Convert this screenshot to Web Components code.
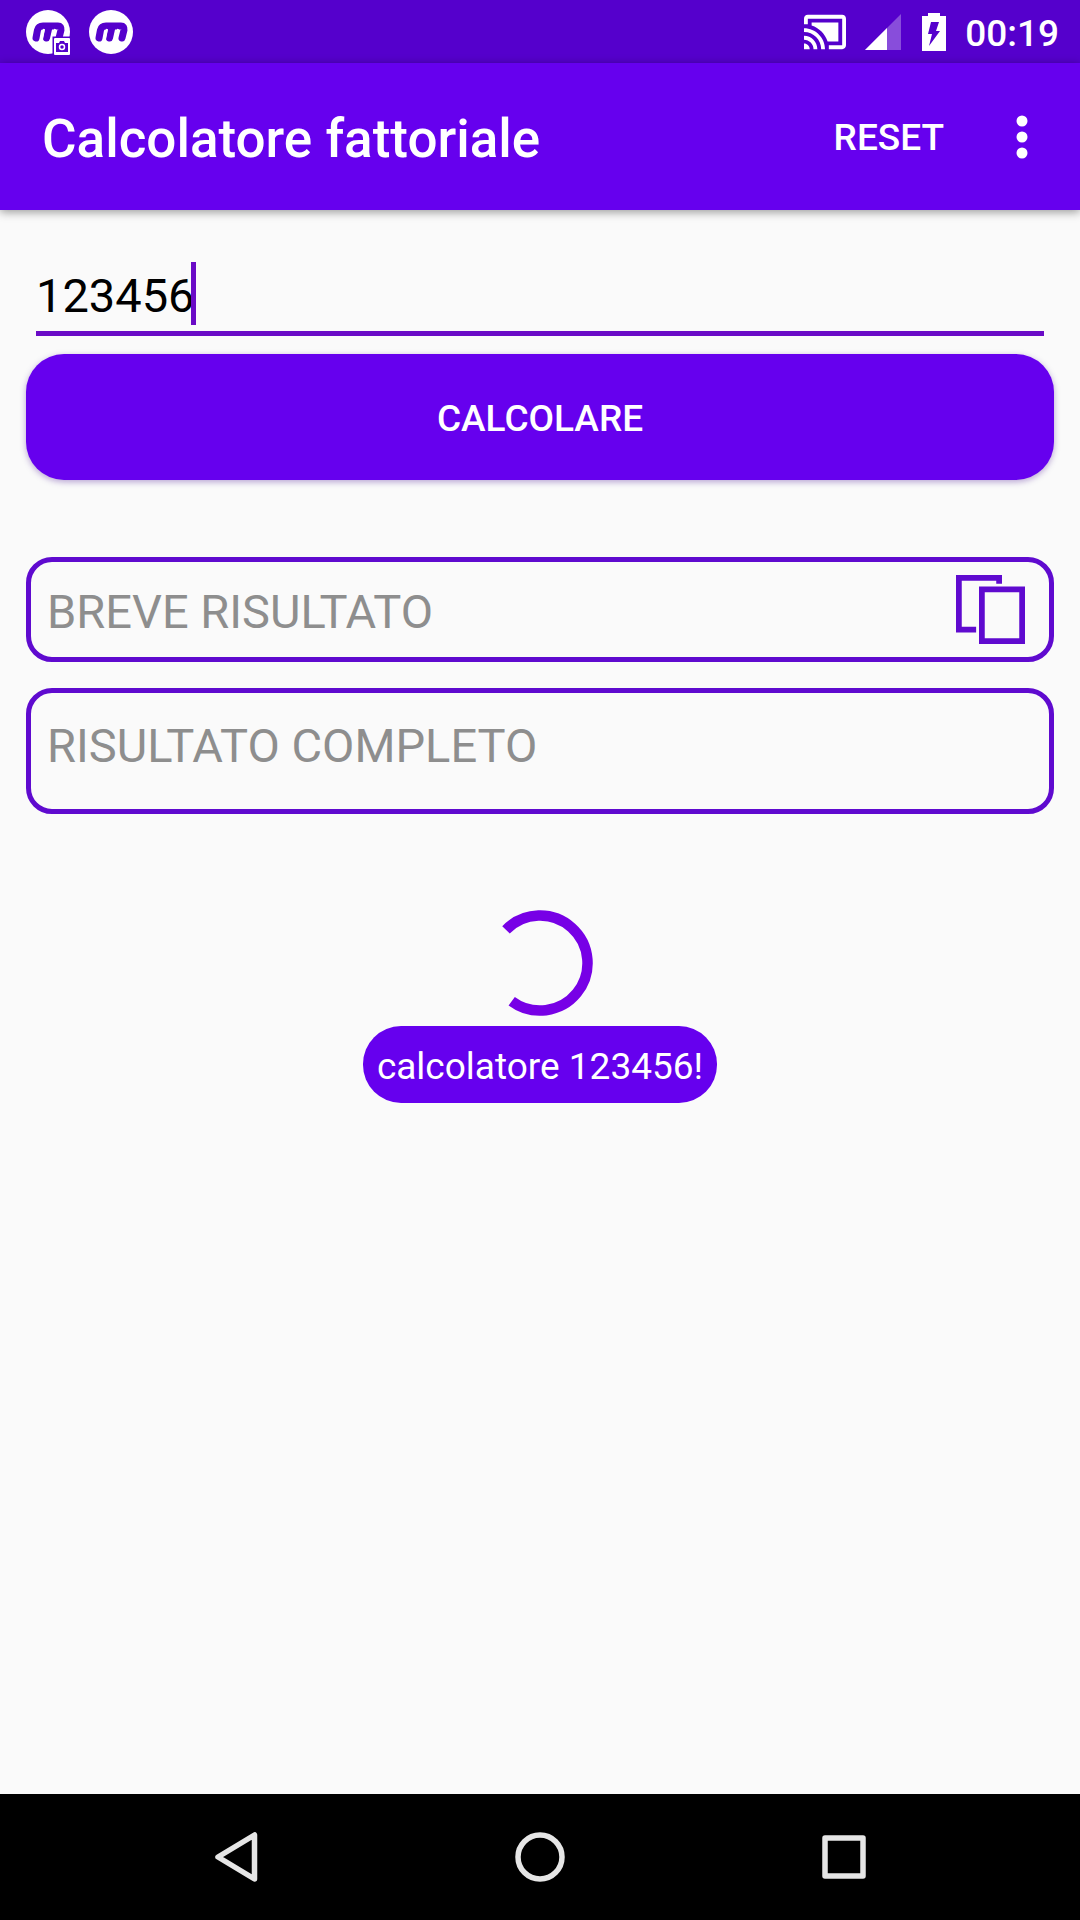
<!DOCTYPE html>
<html lang="it">
  <head>
    <meta charset="utf-8" />
    <meta name="viewport" content="width=device-width,initial-scale=1" />
    <title>Calcolatore fattoriale</title>
    <style>
      body {
        margin: 0;
        background: #fafafa;
        font-family: Roboto, sans-serif;
      }
    </style>

    <template id="statusBarTemplate">
      <style>
        :host {
          display: flex;
          align-items: center;
          justify-content: space-between;
          height: 63px;
          padding: 0 21px 0 26px;
          background: #5500cc;
          color: #fff;
        }

        div {
          display: flex;
          align-items: center;
          gap: 19px;
        }

        svg {
          display: block;
        }

        time {
          padding-top: 3px;
          font-size: 37px;
          font-weight: 500;
        }
      </style>
      <div>
        <svg width="44" height="46" viewBox="0 0 44 46" fill="none">
          <circle cx="22" cy="23" r="22" fill="#fff" />
          <path d="M10 29 11.500 21Q12.500 17 17 17H32Q35.500 17 35 21L33 29M20.500 29 23 18" stroke="#5500cc" stroke-width="7" stroke-linecap="round" stroke-linejoin="round" />
          <path d="M15.500 33 18 20M26.500 33 29 20" stroke="#fff" stroke-width="2" />
          <rect x="26.500" y="27.500" width="18" height="19" fill="#5500cc" />
          <rect x="28" y="29" width="16" height="17" rx="1" fill="#fff" />
          <path d="M30 34h3l1-2h4l1 2h3v9H30z" fill="#5500cc" />
          <circle cx="36" cy="38" r="2.500" stroke="#fff" stroke-width="1.500" />
        </svg>
        <svg width="44" height="46" viewBox="0 0 44 46" fill="none">
          <circle cx="22" cy="23" r="22" fill="#fff" />
          <path d="M10 29 11.500 21Q12.500 17 17 17H32Q35.500 17 35 21L33 29M20.500 29 23 18" stroke="#5500cc" stroke-width="7" stroke-linecap="round" stroke-linejoin="round" />
          <path d="M15.500 33 18 20M26.500 33 29 20" stroke="#fff" stroke-width="2" />
        </svg>
      </div>
      <div>
        <svg width="42" height="42" viewBox="1 2 22 20" fill="#fff">
          <path d="M1 18v3h3c0-1.660-1.340-3-3-3zm0-4v2c2.760 0 5 2.240 5 5h2c0-3.870-3.130-7-7-7zm18-7H5v1.630c3.960 1.280 7.090 4.410 8.370 8.370H19V7zM1 10v2c4.970 0 9 4.030 9 9h2c0-6.080-4.930-11-11-11zm20-7H3c-1.100 0-2 .9-2 2v3h2V5h18v14h-7v2h7c1.100 0 2-.9 2-2V5c0-1.100-.9-2-2-2z" />
        </svg>
        <svg width="36" height="36" viewBox="0 0 36 36" fill="#fff">
          <path d="M36 0v36H0z" opacity=".3" />
          <path d="M22 14v22H0z" />
        </svg>
        <svg width="26" height="38" viewBox="0 0 26 38" fill="#fff">
          <path d="M8 0h12v3h6v35H2V3h6z" />
          <path d="M11 9h8l-3 9h4L9 33l3-12H8z" fill="#5500cc" />
        </svg>
        <time>00:19</time>
      </div>
    </template>

    <template id="appBarTemplate">
      <style>
        :host {
          display: flex;
          align-items: center;
          height: 147px;
          padding: 0 32px 0 42px;
          background: #6600ee;
          color: #fff;
          box-shadow: 0 2px 9px rgba(0, 0, 0, 0.4);
        }

        h1 {
          flex: 1;
          margin: 0;
          padding-top: 4px;
          font-size: 53px;
          font-weight: 500;
        }

        button {
          display: flex;
          align-items: center;
          height: 126px;
          padding: 2px 0 0;
          border: 0;
          background: none;
          color: inherit;
          font: 500 37px Roboto, sans-serif;
        }

        #menuButton {
          justify-content: center;
          width: 52px;
          margin-left: 52px;
          padding: 0;
        }
      </style>
      <h1><slot></slot></h1>
      <button id="resetButton">RESET</button>
      <button id="menuButton" aria-label="Menu">
        <svg width="12" height="44" viewBox="0 0 12 44" fill="#fff">
          <circle cx="6" cy="6" r="5.500" />
          <circle cx="6" cy="22" r="5.500" />
          <circle cx="6" cy="38" r="5.500" />
        </svg>
      </button>
    </template>

    <template id="numberFieldTemplate">
      <style>
        :host {
          display: block;
          position: relative;
          border-bottom: 5px solid #6a0bc6;
          font-size: 47px;
        }

        input {
          display: block;
          box-sizing: border-box;
          width: 100%;
          height: 69px;
          padding: 0 0 2px;
          border: 0;
          outline: 0;
          background: none;
          color: #000;
          caret-color: transparent;
          font: inherit;
        }

        #caret {
          position: absolute;
          top: 0;
          left: calc(var(--digits) * 1ch - 3px);
          width: 5px;
          height: 63px;
          background: #6a0bc6;
          pointer-events: none;
        }
      </style>
      <input id="input" type="text" inputmode="numeric" aria-label="Numero" />
      <div id="caret"></div>
    </template>

    <template id="actionButtonTemplate">
      <style>
        :host {
          display: block;
        }

        button {
          display: block;
          width: 100%;
          height: 126px;
          padding: 2px 0 0;
          border: 0;
          border-radius: 38px;
          background: #6600ee;
          color: #fff;
          font: 500 37px Roboto, sans-serif;
          box-shadow: 0 2px 6px rgba(60, 0, 140, 0.35);
        }
      </style>
      <button><slot></slot></button>
    </template>

    <template id="resultBoxTemplate">
      <style>
        :host {
          display: flex;
          align-items: flex-start;
          justify-content: space-between;
          box-sizing: border-box;
          min-height: 105px;
          padding: 18px 24px 14px 16px;
          border: 5px solid #5f0acf;
          border-radius: 26px;
          color: #8e8e8e;
          font-size: 47px;
          line-height: 63px;
        }

        :host([full]) {
          min-height: 126px;
          padding-top: 21px;
        }
      </style>
      <output><slot></slot></output>
      <slot name="action"></slot>
    </template>

    <template id="copyButtonTemplate">
      <style>
        :host {
          display: block;
          margin: -5px 0;
        }

        button {
          display: block;
          padding: 0;
          border: 0;
          background: none;
        }

        svg {
          display: block;
        }
      </style>
      <button aria-label="Copia">
        <svg width="69" height="69" viewBox="0 0 24 24" fill="none" stroke="#5f0acf" stroke-width="2">
          <path d="M7 19H1V1h14v2" />
          <rect x="9" y="5" width="14" height="18" />
        </svg>
      </button>
    </template>

    <template id="progressNoteTemplate">
      <style>
        :host {
          display: flex;
          flex-direction: column;
          align-items: center;
          gap: 10px;
        }

        svg {
          display: block;
        }

        p {
          margin: 0;
          padding: 18px 14px 13px;
          border-radius: 38px;
          background: #6600ee;
          color: #fff;
          font-size: 37px;
          line-height: 46px;
        }
      </style>
      <svg width="106" height="106" viewBox="-53 -53 106 106" fill="none">
        <path d="M-34-33.100A47.500 47.500 0 1 1-28.300 38.200" stroke="#7700e6" stroke-width="10.500" />
      </svg>
      <p><slot></slot></p>
    </template>

    <template id="navBarTemplate">
      <style>
        :host {
          display: flex;
          justify-content: center;
          gap: 178px;
          height: 126px;
          background: #000;
        }

        button {
          display: flex;
          align-items: center;
          justify-content: center;
          width: 126px;
          padding: 0;
          border: 0;
          background: none;
        }

        svg {
          fill: none;
          stroke: #e6e6e6;
          stroke-width: 5.500;
          stroke-linejoin: round;
        }
      </style>
      <button aria-label="Indietro">
        <svg width="50" height="50" viewBox="0 0 50 50"><path d="M43.500 3v44L7 25z" /></svg>
      </button>
      <button aria-label="Home">
        <svg width="50" height="50" viewBox="0 0 50 50"><circle cx="25" cy="25" r="22" /></svg>
      </button>
      <button aria-label="Recenti">
        <svg width="50" height="50" viewBox="0 0 50 50"><rect x="6" y="6" width="38" height="38" /></svg>
      </button>
    </template>

    <template id="calculatorAppTemplate">
      <style>
        :host {
          display: flex;
          flex-direction: column;
          min-height: 100vh;
        }

        main {
          flex: 1;
          padding: 52px 26px;
        }

        number-field {
          margin: 0 10px 18px;
        }

        action-button {
          margin-bottom: 77px;
        }

        result-box {
          margin-bottom: 26px;
        }

        progress-note {
          margin-top: 96px;
        }
      </style>
      <status-bar></status-bar>
      <app-bar>Calcolatore fattoriale</app-bar>
      <main>
        <number-field value="123456"></number-field>
        <action-button>CALCOLARE</action-button>
        <result-box>BREVE RISULTATO<copy-button slot="action"></copy-button></result-box>
        <result-box full>RISULTATO COMPLETO</result-box>
        <progress-note>calcolatore 123456!</progress-note>
      </main>
      <nav-bar></nav-bar>
    </template>
  </head>

  <body>
    <calculator-app></calculator-app>

    <script type="module">
      class TemplateElement extends HTMLElement {
        connectedCallback() {
          if (!this.shadowRoot) {
            const template = document.getElementById(this.constructor.template);
            const root = this.attachShadow({ mode: 'open' });
            root.appendChild(document.importNode(template.content, true));
            this.ready(root);
          }
        }

        ready(root) {}
      }

      class StatusBar extends TemplateElement {
        static template = 'statusBarTemplate';
      }

      class AppBar extends TemplateElement {
        static template = 'appBarTemplate';

        ready(root) {
          root.getElementById('resetButton').addEventListener('click', () => {
            this.dispatchEvent(new CustomEvent('reset'));
          });
        }
      }

      class NumberField extends TemplateElement {
        static template = 'numberFieldTemplate';

        ready(root) {
          this.input = root.getElementById('input');
          this.input.addEventListener('input', () => { this.moveCaret(); });
          this.value = this.getAttribute('value') || '';
        }

        // Digits all have the same width, so the caret follows the count.
        moveCaret() {
          this.style.setProperty('--digits', this.input.value.length);
        }

        get value() {
          return this.input.value;
        }
        set value(value) {
          this.input.value = value;
          this.moveCaret();
        }
      }

      class ActionButton extends TemplateElement {
        static template = 'actionButtonTemplate';
      }

      class ResultBox extends TemplateElement {
        static template = 'resultBoxTemplate';
      }

      class CopyButton extends TemplateElement {
        static template = 'copyButtonTemplate';
      }

      class ProgressNote extends TemplateElement {
        static template = 'progressNoteTemplate';
      }

      class NavBar extends TemplateElement {
        static template = 'navBarTemplate';
      }

      class CalculatorApp extends TemplateElement {
        static template = 'calculatorAppTemplate';

        ready(root) {
          const field = root.querySelector('number-field');
          const note = root.querySelector('progress-note');
          root.querySelector('app-bar').addEventListener('reset', () => { field.value = ''; });
          root.querySelector('action-button').addEventListener('click', () => {
            note.textContent = `calcolatore ${field.value}!`;
          });
        }
      }

      customElements.define('status-bar', StatusBar);
      customElements.define('app-bar', AppBar);
      customElements.define('number-field', NumberField);
      customElements.define('action-button', ActionButton);
      customElements.define('result-box', ResultBox);
      customElements.define('copy-button', CopyButton);
      customElements.define('progress-note', ProgressNote);
      customElements.define('nav-bar', NavBar);
      customElements.define('calculator-app', CalculatorApp);
    </script>
  </body>
</html>
